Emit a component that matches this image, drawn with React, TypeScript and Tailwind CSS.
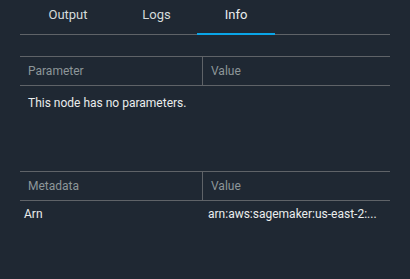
import React, { useState } from "react";

// ---------------- types ----------------
type Tab = "Output" | "Logs" | "Info";

const tabs: { id: Tab; w: string }[] = [
  { id: "Output", w: "w-[96px]" },
  { id: "Logs", w: "w-[81px]" },
  { id: "Info", w: "w-[78px]" },
];

// value is shown already shortened, like the panel does
const metadata = [{ key: "Arn", value: "arn:aws:sagemaker:us-east-2:..." }];

// ---------------- component ----------------
const App: React.FC = () => {
  const [active, setActive] = useState<Tab>("Info");

  return (
    <div
      className="h-[279px] w-full bg-[#1f2833] px-5 text-[12px] text-[#d5dbdb]"
      style={{ fontFamily: 'Roboto, "Liberation Sans", sans-serif' }}
    >
      {/* tabs */}
      <div className="flex h-[35px] border-b border-[#5f6368]">
        {tabs.map(t => (
          <button
            key={t.id}
            onClick={() => setActive(t.id)}
            className={
              "relative pb-[6px] text-center text-[13px] leading-none " +
              t.w +
              (active === t.id ? " text-[#eaeded]" : " text-[#d5dbdb]")
            }
          >
            {t.id}
            {active === t.id && (
              <span className="absolute bottom-[-1px] left-0 right-0 h-[2px] bg-[#0aa5e8]" />
            )}
          </button>
        ))}
      </div>

      {/* parameters */}
      <div className="mt-[21px]">
        <div className="flex h-[30px] border-y border-[#5f6368] text-[#8d9699]">
          <div className="flex w-[183px] shrink-0 items-center border-r border-[#5f6368] pl-2">Parameter</div>
          <div className="flex items-center pl-2">Value</div>
        </div>
        <div className="flex h-[33px] items-center pl-2 text-[#eaeded]">This node has no parameters.</div>
      </div>

      {/* metadata */}
      <div className="mt-[52px]">
        <div className="flex h-[30px] border-y border-[#5f6368] text-[#8d9699]">
          <div className="flex w-[183px] shrink-0 items-center border-r border-[#5f6368] pl-2">Metadata</div>
          <div className="flex items-center pl-2">Value</div>
        </div>
        {metadata.map(m => (
          <div key={m.key} className="flex h-[26px] items-center text-[#eaeded]">
            <div className="w-[183px] shrink-0 pl-1">{m.key}</div>
            <div className="whitespace-nowrap pl-[5px]">{m.value}</div>
          </div>
        ))}
      </div>
    </div>
  );
};

export default App;
